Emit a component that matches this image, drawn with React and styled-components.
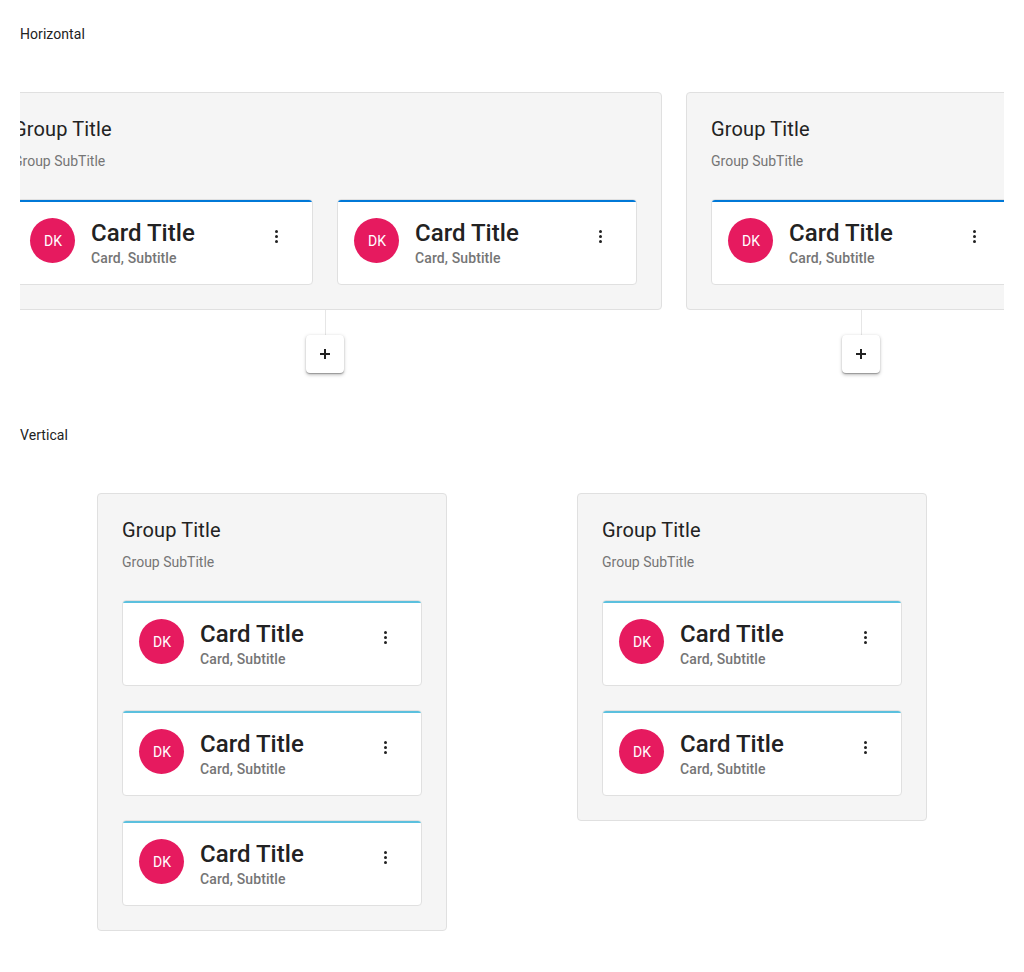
import React from 'react';
import styled, { createGlobalStyle } from 'styled-components';

const GlobalStyle = createGlobalStyle`
  *, *::before, *::after { box-sizing: border-box; }
  body {
    margin: 0;
    background: #fff;
    color: #222;
    font: 400 14px/20px Roboto, "Liberation Sans", sans-serif;
  }
`;

const Page = styled.main`
  padding: 24px 20px 0;
  height: 972px;
  overflow: hidden;
`;

const SectionLabel = styled.div`
  height: 20px;
  letter-spacing: 0.06px;
`;

const HorizontalBoard = styled.section`
  display: flex;
  gap: 24px;
  height: 333px;
  margin-top: 48px;
  overflow: hidden;
`;

const Column = styled.div`
  display: flex;
  flex: none;
  flex-direction: column;
  align-items: center;
  margin-left: ${({ $shift = 0 }) => $shift}px;
`;

const VerticalBoard = styled.section`
  display: grid;
  grid-template-columns: 480px 480px;
  justify-content: center;
  align-items: start;
  margin-top: 48px;
`;

const GroupBox = styled.div`
  padding: 24px;
  border: 1px solid #e0e0e0;
  border-radius: 4px;
  background: #f5f5f5;
`;

const GroupHeader = styled.header`
  height: 82px;
`;

const GroupTitle = styled.h2`
  margin: 0 0 10px;
  font-size: 20px;
  line-height: 24px;
  font-weight: 400;
  letter-spacing: 0.14px;
`;

const GroupSubtitle = styled.p`
  margin: 0;
  color: #757575;
  line-height: 20px;
`;

const CardList = styled.div`
  display: flex;
  flex-direction: ${({ $direction }) => $direction};
  gap: 24px;
`;

const CardBox = styled.article`
  width: 300px;
  height: 86px;
  border: 1px solid #e0e0e0;
  border-radius: 4px;
  background: #fff;
  overflow: hidden;
`;

const CardAccent = styled.div`
  height: 2px;
  background: ${({ $color }) => $color};
`;

const CardBody = styled.div`
  display: flex;
  align-items: flex-start;
  padding: 16px;
`;

const Avatar = styled.div`
  display: flex;
  align-items: center;
  justify-content: center;
  width: 45px;
  height: 45px;
  margin-right: 16px;
  border-radius: 50%;
  background: #e61a5f;
  color: #fff;
  line-height: 20px;
  padding-top: 1px;
  padding-left: 1px;
`;

const CardText = styled.div`
  flex: 1;
  font-weight: 500;
`;

const CardTitle = styled.h3`
  margin: 0;
  font-size: 24px;
  line-height: 30px;
  font-weight: 500;
  letter-spacing: 0.03px;
`;

const CardSubtitle = styled.p`
  margin: 0;
  color: #757575;
  line-height: 20px;
  letter-spacing: 0.11px;
`;

const MenuButton = styled.button`
  display: flex;
  justify-content: center;
  width: 39px;
  height: 37px;
  padding: 12px 0;
  border: 0;
  background: transparent;
  color: #222;
`;

const Connector = styled.div`
  width: 1px;
  height: 25px;
  margin-left: 1px;
  background: #e6e6e6;
`;

const AddButton = styled.button`
  display: flex;
  align-items: center;
  justify-content: center;
  width: 38px;
  height: 38px;
  padding: 0;
  border: 0;
  border-radius: 4px;
  background: #fff;
  color: #222;
  box-shadow: 0 1.6px 3.6px rgba(0, 0, 0, 0.25), 0 1px 1px rgba(0, 0, 0, 0.25);
`;

const BLUE = '#0078d7';
const CYAN = '#5bc0de';

function Card({ color }) {
  return (
    <CardBox>
      <CardAccent $color={color} />
      <CardBody>
        <Avatar>DK</Avatar>
        <CardText>
          <CardTitle>Card Title</CardTitle>
          <CardSubtitle>Card, Subtitle</CardSubtitle>
        </CardText>
        <MenuButton aria-label="More">
          <svg width="3" height="13" viewBox="0 0 3 13" fill="currentColor">
            <circle cx="1.5" cy="1.5" r="1.5" />
            <circle cx="1.5" cy="6.5" r="1.5" />
            <circle cx="1.5" cy="11.5" r="1.5" />
          </svg>
        </MenuButton>
      </CardBody>
    </CardBox>
  );
}

function Group({ count, direction, color }) {
  return (
    <GroupBox>
      <GroupHeader>
        <GroupTitle>Group Title</GroupTitle>
        <GroupSubtitle>Group SubTitle</GroupSubtitle>
      </GroupHeader>
      <CardList $direction={direction}>
        {Array.from({ length: count }, (_, i) => (
          <Card key={i} color={color} />
        ))}
      </CardList>
    </GroupBox>
  );
}

function AddStep() {
  return (
    <>
      <Connector />
      <AddButton aria-label="Add">
        <svg width="10" height="10" viewBox="0 0 10 10" fill="currentColor">
          <path d="M4 0h2v4h4v2H6v4H4V6H0V4h4z" />
        </svg>
      </AddButton>
    </>
  );
}

export default function App() {
  return (
    <Page>
      <GlobalStyle />
      <SectionLabel>Horizontal</SectionLabel>
      <HorizontalBoard>
        <Column $shift={-32}>
          <Group count={2} direction="row" color={BLUE} />
          <AddStep />
        </Column>
        <Column>
          <Group count={1} direction="row" color={BLUE} />
          <AddStep />
        </Column>
      </HorizontalBoard>
      <SectionLabel>Vertical</SectionLabel>
      <VerticalBoard>
        <Column>
          <Group count={3} direction="column" color={CYAN} />
        </Column>
        <Column>
          <Group count={2} direction="column" color={CYAN} />
        </Column>
      </VerticalBoard>
    </Page>
  );
}
